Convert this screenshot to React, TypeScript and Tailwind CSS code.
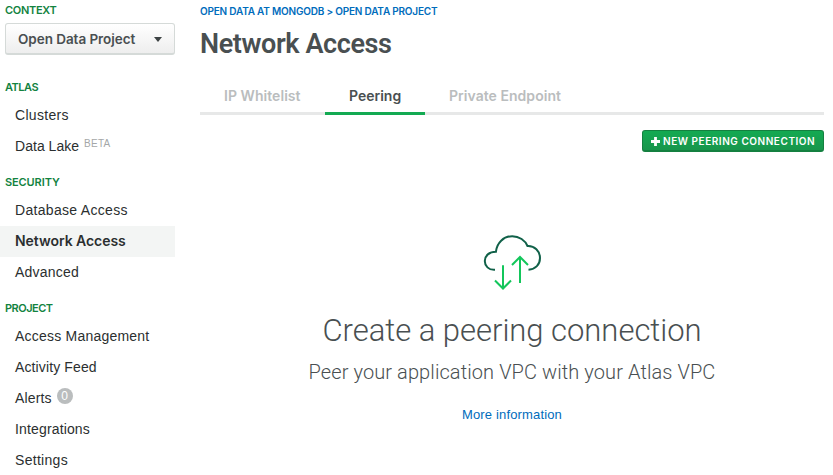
import React from "react";

const sans = "font-['Liberation_Sans',Arial,sans-serif]";
const inter = "font-['Inter','Liberation_Sans',sans-serif]";
const roboto = "font-['Roboto','Liberation_Sans',sans-serif]";

type Item = { label: string; spacing: string; active?: boolean; beta?: boolean; count?: number };

function Section({ title, spacing, items }: { title: string; spacing: string; items: Item[] }) {
  return (
    <section>
      <h2 className={`${inter} flex h-[33px] items-center whitespace-nowrap pl-[5px] pt-[8px] text-[11px] font-semibold text-[#13833f] ${spacing}`}>
        {title}
      </h2>
      <ul>
        {items.map((item) => (
          <li
            key={item.label}
            className={`flex h-[31px] items-center whitespace-nowrap pl-[15px] text-[#2b2f30] ${
              item.active ? `${inter} bg-[#f3f5f4] pb-[2px] text-[14px] font-semibold` : `${sans} pb-px text-[14px]`
            }`}
          >
            <span className={item.spacing}>{item.label}</span>
            {item.beta && <sup className="top-[-2px] ml-[5px] text-[10px] leading-none tracking-[0.25px] text-[#a4a7a8]">BETA</sup>}
            {item.count !== undefined && (
              <span className="mb-[4px] ml-[5px] flex size-4 items-center justify-center rounded-full bg-[#babdbe] text-[12px] leading-none text-white">
                {item.count}
              </span>
            )}
          </li>
        ))}
      </ul>
    </section>
  );
}

function CloudIcon() {
  return (
    <svg className="h-[60px] w-[60px]" viewBox="0 0 60 60" fill="none" strokeWidth="2">
      <path
        d="M13 36.8C6.5 37.3 2.8 32.8 2.8 28C2.8 22.6 7.2 18.8 13.9 18.8C14.8 10 21.5 3.2 30.2 3.2C37.2 3.2 43.2 7.5 45.5 13C52.5 12.6 58 18 58 25C58 31.5 53.5 36.3 46.5 36.8"
        stroke="#116149"
      />
      <path d="M21 32.2V55.5M13 47.5L21 55.5L29 47.5M38 50V24M30 32L38 24L46 32" stroke="#13c65b" />
    </svg>
  );
}

export default function App() {
  return (
    <div className={`${sans} flex h-[475px] w-[833px] overflow-hidden bg-white text-[#494f51]`}>
      <aside className="w-[175px] shrink-0">
        <h2 className={`${inter} flex h-[23px] items-center pb-[3px] pl-[5px] text-[11px] font-semibold tracking-[-0.3px] text-[#13833f]`}>
          CONTEXT
        </h2>
        <button className={`${inter} ml-[5px] flex h-8 w-[170px] items-center justify-between whitespace-nowrap rounded-[3px] border border-b-2 border-[#d5dad8] bg-linear-to-b from-white to-[#eeeeee] pr-3 pl-3 pt-px text-[13.5px] font-semibold tracking-[-0.05px] text-[#494f51]`}>
          <span>Open Data Project</span>
          <span className="border-x-[4.5px] border-t-[5px] border-x-transparent border-t-[#3d4344]" />
        </button>
        <div className="h-3" />
        <Section
          title="ATLAS"
          spacing="tracking-[-0.5px]"
          items={[
            { label: "Clusters", spacing: "tracking-[0.3px]" },
            { label: "Data Lake", spacing: "tracking-[0.03px]", beta: true },
          ]}
        />
        <Section
          title="SECURITY"
          spacing="tracking-[-0.1px]"
          items={[
            { label: "Database Access", spacing: "tracking-[0.31px]" },
            { label: "Network Access", spacing: "tracking-[-0.05px]", active: true },
            { label: "Advanced", spacing: "tracking-[0.2px]" },
          ]}
        />
        <Section
          title="PROJECT"
          spacing="tracking-[-0.5px]"
          items={[
            { label: "Access Management", spacing: "tracking-[0.22px]" },
            { label: "Activity Feed", spacing: "tracking-[0.12px]" },
            { label: "Alerts", spacing: "tracking-[0.15px]", count: 0 },
            { label: "Integrations", spacing: "tracking-[0.15px]" },
            { label: "Settings", spacing: "tracking-[0.3px]" },
          ]}
        />
      </aside>
      <main className="ml-[25px] flex w-[624px] flex-col">
        <nav className={`${inter} flex h-[23px] items-center whitespace-nowrap text-[10px] font-semibold tracking-[-0.2px] text-[#006cbc]`}>
          OPEN DATA AT MONGODB &gt; OPEN DATA PROJECT
        </nav>
        <h1 className={`${roboto} flex h-10 items-center whitespace-nowrap pt-[2px] text-[27px] font-semibold tracking-[-0.4px]`}>Network Access</h1>
        <div className={`${inter} mt-[14px] flex h-[38px] whitespace-nowrap border-b-[3px] border-[#e7e8e8] text-[14px] font-semibold text-[#babdbe]`}>
          <div className="flex h-[38px] w-[125px] items-center pb-[2px] pl-6 tracking-[0.05px]">IP Whitelist</div>
          <div className="flex h-[38px] w-[100px] items-center border-b-[3px] border-[#13aa52] pt-px pl-6 text-[#494f51]">Peering</div>
          <div className="flex h-[38px] items-center pb-[2px] pl-6 tracking-[0.04px]">Private Endpoint</div>
        </div>
        <button className={`${inter} mt-[15px] flex h-[22px] w-[182px] items-center self-end whitespace-nowrap rounded-[3px] border border-b-2 border-[#148040] bg-linear-to-b from-[#13aa52] to-[#18964c] pl-2 pt-px text-[10px] font-semibold text-white`}>
          <svg className="mr-[3px] size-[9px]" viewBox="0 0 9 9" fill="none" stroke="white" strokeWidth="2.8">
            <path d="M4.5 0V9M0 4.5H9" />
          </svg>
          <span className="tracking-[0.55px]">NEW PEERING CONNECTION</span>
        </button>
        <div className="mt-[81px] flex flex-col items-center">
          <CloudIcon />
          <h2 className={`${roboto} mt-[18px] h-10 whitespace-nowrap text-[31px] leading-10 font-light tracking-[-0.03px]`}>Create a peering connection</h2>
          <p className={`${roboto} mt-[7px] h-7 whitespace-nowrap text-[20px] leading-7 font-light tracking-[0.09px]`}>Peer your application VPC with your Atlas VPC</p>
          <a className="mt-[19px] whitespace-nowrap text-[13px] leading-5 tracking-[0.15px] text-[#006cbc]">More information</a>
        </div>
      </main>
    </div>
  );
}
